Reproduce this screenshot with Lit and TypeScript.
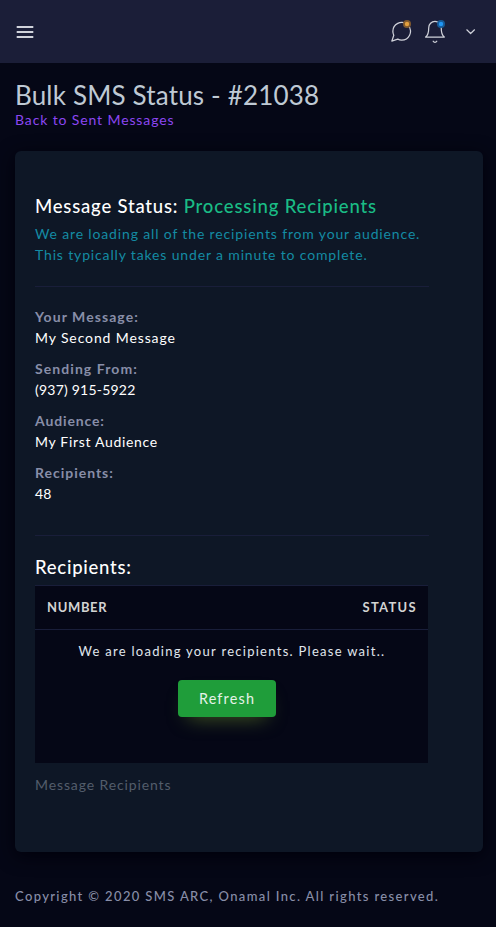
import { LitElement, html, css } from "lit";
import { customElement } from "lit/decorators.js";

const DETAILS = [
  ["Your Message:", "My Second Message", "message"],
  ["Sending From:", "(937) 915-5922", "sender"],
  ["Audience:", "My First Audience", "audience"],
  ["Recipients:", "48", "count"],
];

@customElement("app-root")
export class AppRoot extends LitElement {
  static styles = css`
    :host {
      display: block;
      box-sizing: border-box;
      width: 100%;
      height: 927px;
      overflow: hidden;
      background: #050716;
      color: #fff;
      font: 400 14px/21px Lato, "Open Sans", sans-serif;
      letter-spacing: 0.88px;
      white-space: nowrap;
    }
    h1, h2, p, dl, dd, dt { margin: 0; font-weight: 400; }
    header {
      height: 63px;
      box-sizing: border-box;
      background: #1b1e38;
      display: flex;
      align-items: center;
      justify-content: space-between;
    }
    header svg { display: block; fill: none; stroke: #d0d2da; }
    .intro { padding: 16px 15px 0; height: 88px; box-sizing: border-box; }
    h1 { font-size: 26px; line-height: 32px; height: 30px; color: #bfc9d4; letter-spacing: 0.17px; }
    .back { display: block; color: #8c46f2; }
    .card {
      height: 701px;
      box-sizing: border-box;
      margin: 0 13px 0 15px;
      padding: 42px 54px 0 20px;
      border-radius: 6px;
      background: #0e1726;
      box-shadow: 0 4px 18px #00000b;
    }
    h2 { font-size: 18.5px; line-height: 26px; height: 24px; font-weight: 500; letter-spacing: 0.8px; }
    .state { color: #1abc85; letter-spacing: 0.84px; }
    .info { color: #148ba3; margin-top: 6px; letter-spacing: 0.85px; }
    hr { border: 0; height: 1px; margin: 0; background: #191e3a; }
    .first { margin-top: 21px; }
    dl { margin-top: 19px; display: grid; gap: 10px; }
    dt { font-weight: 700; color: #888ea8; letter-spacing: 1.07px; }
    .audience dt { letter-spacing: 0.86px; }
    .count dt { letter-spacing: 0.98px; }
    .sender dd { letter-spacing: 0.22px; }
    .audience dd { letter-spacing: 0.68px; }
    .count dd { letter-spacing: 0.2px; }
    .second { margin-top: 31px; }
    .heading { margin-top: 18px; letter-spacing: 0.74px; }
    .table {
      margin: 7px 1px 0 0;
      height: 178px;
      box-sizing: border-box;
      background: #050716;
      border-top: 1px solid #191e3a;
    }
    .head {
      display: flex;
      justify-content: space-between;
      align-items: center;
      height: 44px;
      box-sizing: border-box;
      padding: 0 11px 0 12px;
      border-bottom: 1px solid #191e3a;
      font-size: 13px;
      font-weight: 700;
      color: #d3d3d3;
      letter-spacing: 0.65px;
    }
    .head span + span { letter-spacing: 1.3px; }
    .loading { margin-top: 11px; padding-left: 43.5px; font-size: 13px; color: #e0e6ed; letter-spacing: 1.28px; }
    button {
      display: block;
      width: 98px;
      height: 37px;
      margin: 18px 0 0 143px;
      padding: 0 0 1px;
      border: 0;
      border-radius: 4px;
      background: #1f9d3a;
      color: #e6f3e8;
      font: inherit;
      font-size: 14.4px;
      letter-spacing: 1.18px;
      box-shadow: 0 10px 20px -10px rgba(122, 163, 44, 0.59);
    }
    .caption { margin-top: 11px; color: #535d6b; }
    footer { padding: 34px 15px 0; font-size: 13px; font-weight: 500; color: #888ea8; letter-spacing: 1.36px; }
  `;

  render() {
    return html`
      <header>
        <svg width="50" height="63" stroke-width="2" aria-label="Menu">
          <path d="M16.700 27H33.300M16.700 32H33.300M16.700 37H33.300" />
        </svg>
        <svg width="120" height="63" viewBox="376 0 120 63" stroke-width="1.200" stroke-linecap="round" stroke-linejoin="round">
          <g transform="translate(388.700 19.300) scale(1.040)">
            <path d="M21 11.500a8.380 8.380 0 0 1-.9 3.800 8.500 8.500 0 0 1-7.600 4.700 8.380 8.380 0 0 1-3.800-.9L3 21l1.900-5.700a8.380 8.380 0 0 1-.9-3.800 8.500 8.500 0 0 1 4.700-7.600 8.380 8.380 0 0 1 3.800-.9h.5a8.480 8.480 0 0 1 8 8v.5z" />
          </g>
          <g transform="translate(422.500 19.400) scale(1.040)">
            <path d="M18 8A6 6 0 0 0 6 8c0 7-3 9-3 9h18s-3-2-3-9" />
            <path d="M13.730 21a2 2 0 0 1-3.460 0" />
          </g>
          <path d="M466.800 29.800L470.600 33.500L474.500 29.800" />
          <g stroke="none">
            <circle cx="407" cy="24" r="4" fill="#80592e" />
            <circle cx="407" cy="24" r="2.200" fill="#e2a03f" />
            <circle cx="441" cy="24" r="4" fill="#165a96" />
            <circle cx="441" cy="24" r="2.200" fill="#2196f3" />
          </g>
        </svg>
      </header>
      <div class="intro">
        <h1>Bulk SMS Status - #21038</h1>
        <a class="back">Back to Sent Messages</a>
      </div>
      <main class="card">
        <h2>Message Status: <span class="state">Processing Recipients</span></h2>
        <p class="info">We are loading all of the recipients from your audience.<br />This typically takes under a minute to complete.</p>
        <hr class="first" />
        <dl>
          ${DETAILS.map(([label, value, key]) => html`<div class=${key}><dt>${label}</dt><dd>${value}</dd></div>`)}
        </dl>
        <hr class="second" />
        <h2 class="heading">Recipients:</h2>
        <div class="table">
          <div class="head"><span>NUMBER</span><span>STATUS</span></div>
          <p class="loading">We are loading your recipients. Please wait..</p>
          <button>Refresh</button>
        </div>
        <p class="caption">Message Recipients</p>
      </main>
      <footer>Copyright © 2020 SMS ARC, Onamal Inc. All rights reserved.</footer>
    `;
  }
}
